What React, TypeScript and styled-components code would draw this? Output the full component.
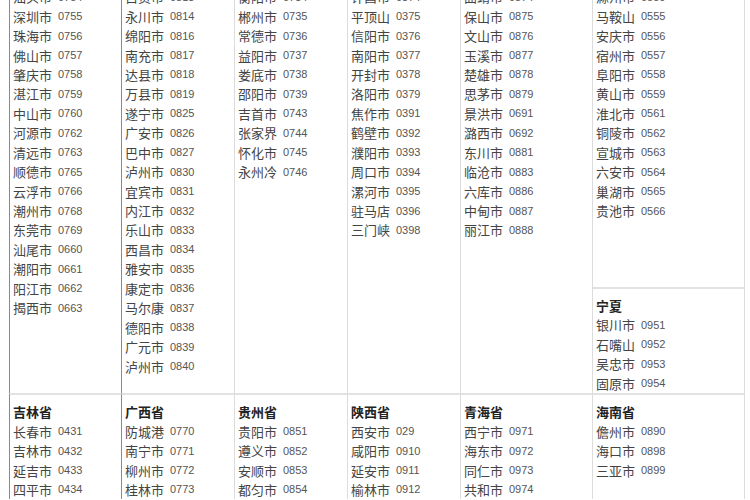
import styled, { createGlobalStyle } from "styled-components";

type Entry = [string, string];

const GlobalStyle = createGlobalStyle`
  html, body {
    margin: 0;
    padding: 0;
    background: #fff;
    overflow: hidden;
  }
  body {
    font-family: "Noto Sans CJK SC", "Noto Sans", sans-serif;
  }
`;

const topColumns: Entry[][] = [
  [
    ["汕头市", "0754"],
    ["深圳市", "0755"],
    ["珠海市", "0756"],
    ["佛山市", "0757"],
    ["肇庆市", "0758"],
    ["湛江市", "0759"],
    ["中山市", "0760"],
    ["河源市", "0762"],
    ["清远市", "0763"],
    ["顺德市", "0765"],
    ["云浮市", "0766"],
    ["潮州市", "0768"],
    ["东莞市", "0769"],
    ["汕尾市", "0660"],
    ["潮阳市", "0661"],
    ["阳江市", "0662"],
    ["揭西市", "0663"],
  ],
  [
    ["自贡市", "0813"],
    ["永川市", "0814"],
    ["绵阳市", "0816"],
    ["南充市", "0817"],
    ["达县市", "0818"],
    ["万县市", "0819"],
    ["遂宁市", "0825"],
    ["广安市", "0826"],
    ["巴中市", "0827"],
    ["泸州市", "0830"],
    ["宜宾市", "0831"],
    ["内江市", "0832"],
    ["乐山市", "0833"],
    ["西昌市", "0834"],
    ["雅安市", "0835"],
    ["康定市", "0836"],
    ["马尔康", "0837"],
    ["德阳市", "0838"],
    ["广元市", "0839"],
    ["泸州市", "0840"],
  ],
  [
    ["衡阳市", "0734"],
    ["郴州市", "0735"],
    ["常德市", "0736"],
    ["益阳市", "0737"],
    ["娄底市", "0738"],
    ["邵阳市", "0739"],
    ["吉首市", "0743"],
    ["张家界", "0744"],
    ["怀化市", "0745"],
    ["永州冷", "0746"],
  ],
  [
    ["许昌市", "0374"],
    ["平顶山", "0375"],
    ["信阳市", "0376"],
    ["南阳市", "0377"],
    ["开封市", "0378"],
    ["洛阳市", "0379"],
    ["焦作市", "0391"],
    ["鹤壁市", "0392"],
    ["濮阳市", "0393"],
    ["周口市", "0394"],
    ["漯河市", "0395"],
    ["驻马店", "0396"],
    ["三门峡", "0398"],
  ],
  [
    ["曲靖市", "0874"],
    ["保山市", "0875"],
    ["文山市", "0876"],
    ["玉溪市", "0877"],
    ["楚雄市", "0878"],
    ["思茅市", "0879"],
    ["景洪市", "0691"],
    ["潞西市", "0692"],
    ["东川市", "0881"],
    ["临沧市", "0883"],
    ["六库市", "0886"],
    ["中甸市", "0887"],
    ["丽江市", "0888"],
  ],
];

const anhui: Entry[] = [
  ["滁州市", "0550"],
  ["马鞍山", "0555"],
  ["安庆市", "0556"],
  ["宿州市", "0557"],
  ["阜阳市", "0558"],
  ["黄山市", "0559"],
  ["淮北市", "0561"],
  ["铜陵市", "0562"],
  ["宣城市", "0563"],
  ["六安市", "0564"],
  ["巢湖市", "0565"],
  ["贵池市", "0566"],
];

const ningxia: Entry[] = [
  ["银川市", "0951"],
  ["石嘴山", "0952"],
  ["吴忠市", "0953"],
  ["固原市", "0954"],
];

const bottomGroups: { title: string; items: Entry[] }[] = [
  {
    title: "吉林省",
    items: [
      ["长春市", "0431"],
      ["吉林市", "0432"],
      ["延吉市", "0433"],
      ["四平市", "0434"],
    ],
  },
  {
    title: "广西省",
    items: [
      ["防城港", "0770"],
      ["南宁市", "0771"],
      ["柳州市", "0772"],
      ["桂林市", "0773"],
    ],
  },
  {
    title: "贵州省",
    items: [
      ["贵阳市", "0851"],
      ["遵义市", "0852"],
      ["安顺市", "0853"],
      ["都匀市", "0854"],
    ],
  },
  {
    title: "陕西省",
    items: [
      ["西安市", "029"],
      ["咸阳市", "0910"],
      ["延安市", "0911"],
      ["榆林市", "0912"],
    ],
  },
  {
    title: "青海省",
    items: [
      ["西宁市", "0971"],
      ["海东市", "0972"],
      ["同仁市", "0973"],
      ["共和市", "0974"],
    ],
  },
  {
    title: "海南省",
    items: [
      ["儋州市", "0890"],
      ["海口市", "0898"],
      ["三亚市", "0899"],
    ],
  },
];

const Table = styled.div`
  margin-left: 9px;
  width: 736px;
  display: grid;
  grid-template-columns: 112px 113px 113px 113px 132px 153px;
  grid-template-rows: 406px auto;
  margin-top: -13px;
`;

const Cell = styled.div<{ $dark?: boolean; $last?: boolean; $bottom?: boolean }>`
  box-sizing: border-box;
  border-left: 1px solid ${(p) => (p.$dark ? "#8a8a8a" : "#dcdcdc")};
  border-right: ${(p) => (p.$last ? "1px solid #dcdcdc" : "none")};
  border-top: ${(p) => (p.$bottom ? "2px solid #e2e2e2" : "none")};
  padding: ${(p) => (p.$bottom ? "7px 0 0 3px" : "0 0 0 3px")};
  display: flex;
  flex-direction: column;
`;

const Block = styled.div<{ $fill?: boolean; $split?: boolean }>`
  flex: ${(p) => (p.$fill ? 1 : "none")};
  border-top: ${(p) => (p.$split ? "2px solid #e2e2e2" : "none")};
  margin-left: ${(p) => (p.$split ? "-3px" : "0")};
  padding-left: ${(p) => (p.$split ? "3px" : "0")};
  padding-top: ${(p) => (p.$split ? "7px" : "0")};
`;

const Title = styled.div`
  height: 19.45px;
  line-height: 19.45px;
  font-size: 13px;
  font-weight: 700;
  color: #222;
`;

const Row = styled.div`
  display: flex;
  align-items: center;
  height: 19.45px;
  white-space: nowrap;
`;

const Name = styled.span`
  width: 45px;
  font-size: 13px;
  color: #444;
`;

const Code = styled.span`
  font-family: "Liberation Sans", Arial, sans-serif;
  font-size: 11px;
  color: #555;
`;

function Rows({ items }: { items: Entry[] }) {
  return (
    <>
      {items.map(([name, code], i) => (
        <Row key={i}>
          <Name>{name}</Name>
          <Code>{code}</Code>
        </Row>
      ))}
    </>
  );
}

export default function App() {
  return (
    <>
      <GlobalStyle />
      <Table>
        {topColumns.map((col, i) => (
          <Cell key={i} $dark={i < 2}>
            <Rows items={col} />
          </Cell>
        ))}
        <Cell $last>
          <Block $fill>
            <Rows items={anhui} />
          </Block>
          <Block $split>
            <Title>宁夏</Title>
            <Rows items={ningxia} />
          </Block>
        </Cell>
        {bottomGroups.map((g, i) => (
          <Cell key={g.title} $dark={i < 2} $last={i === 5} $bottom>
            <Title>{g.title}</Title>
            <Rows items={g.items} />
          </Cell>
        ))}
      </Table>
    </>
  );
}
